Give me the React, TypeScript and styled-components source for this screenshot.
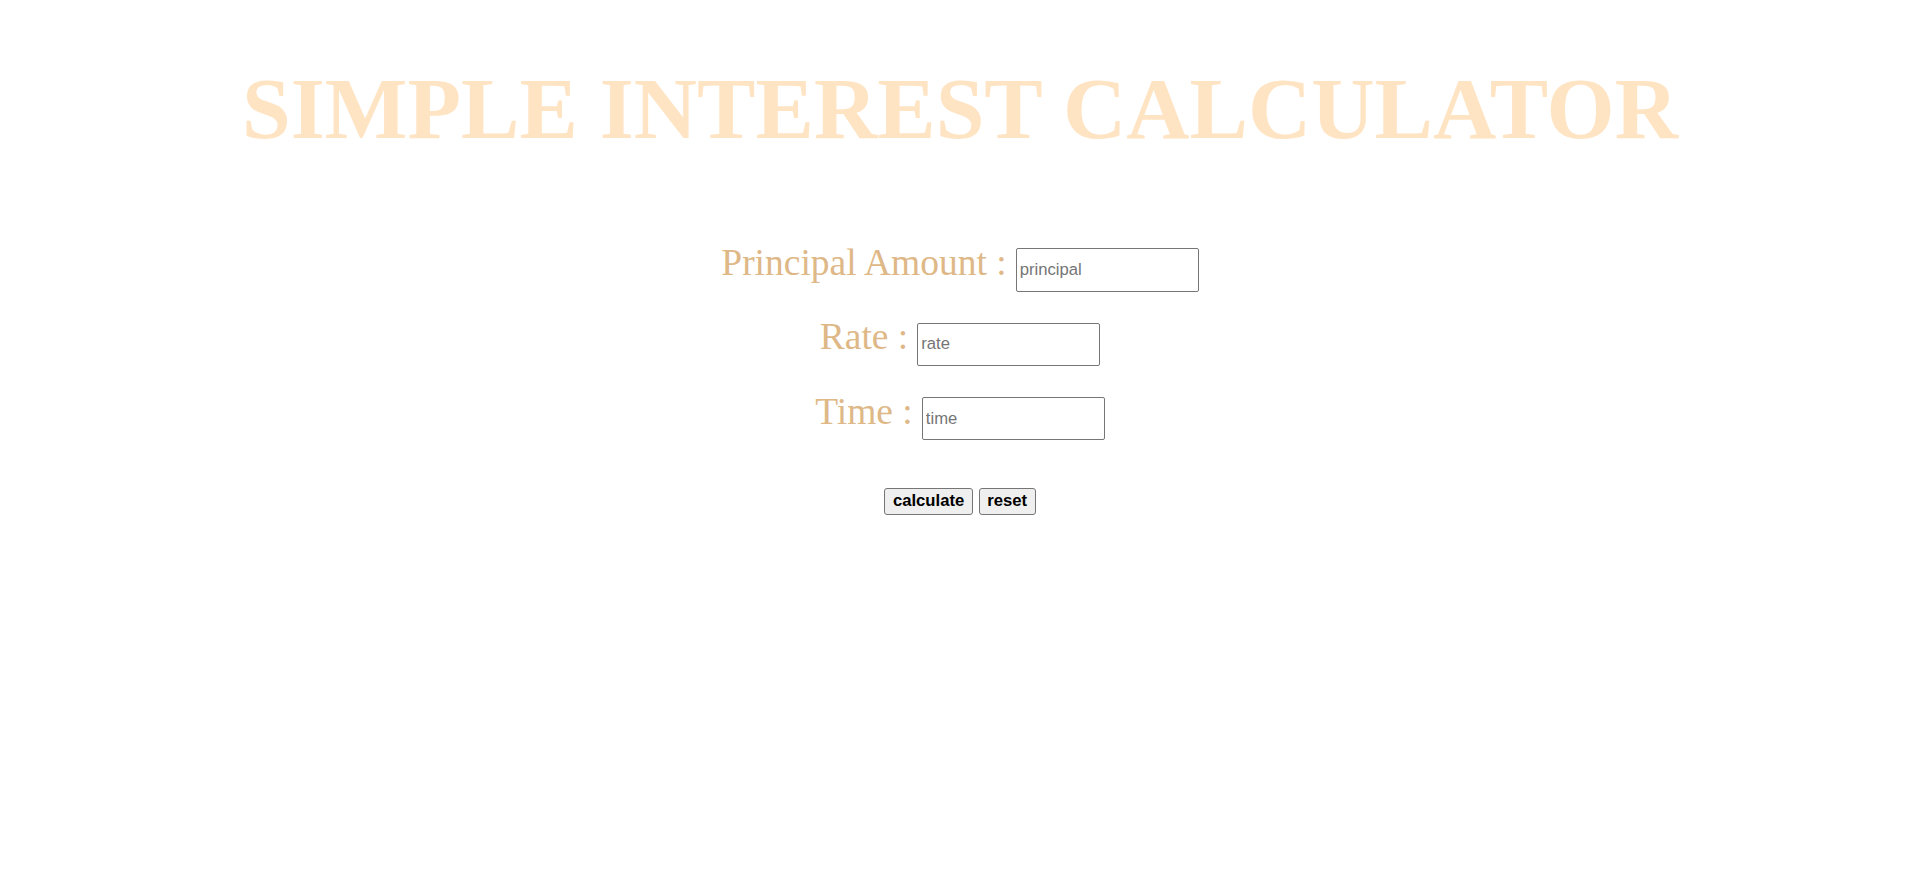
import React from 'react';
import styled, { createGlobalStyle } from 'styled-components';

const GlobalStyle = createGlobalStyle`
	body {
		margin: 0;
		background: #ffffff;
		font-family: 'Liberation Serif', 'Times New Roman', serif;
	}
`;

const fields = [
	{ label: 'Principal Amount :', placeholder: 'principal' },
	{ label: 'Rate :', placeholder: 'rate' },
	{ label: 'Time :', placeholder: 'time' },
];

const App = () => {
	return (
		<>
			<GlobalStyle />
			<Page>
				<Title>SIMPLE INTEREST CALCULATOR</Title>
				<Form>
					{fields.map((field) => (
						<Row key={field.placeholder}>
							<Label>{field.label}</Label>
							<Input type="number" placeholder={field.placeholder} />
						</Row>
					))}
				</Form>
				<Actions>
					<Button type="button">calculate</Button>
					<Button type="button">reset</Button>
				</Actions>
			</Page>
		</>
	);
};

const Page = styled('div')({
	display: 'flex',
	flexDirection: 'column',
	alignItems: 'center',
	minHeight: '888px',
});

const Title = styled('h1')({
	margin: '59px 0 0',
	fontSize: '87.6px',
	lineHeight: '100px',
	fontWeight: 700,
	color: '#ffe4c4',
	textAlign: 'center',
	whiteSpace: 'nowrap',
});

const Form = styled('div')({
	display: 'flex',
	flexDirection: 'column',
	alignItems: 'center',
	gap: '23.6px',
	marginTop: '82px',
});

const Row = styled('div')({
	display: 'flex',
	alignItems: 'baseline',
	justifyContent: 'center',
	gap: '9px',
});

const Label = styled.span`
	font-size: 37.5px;
	line-height: 43.5px;
	color: #deb887;
	white-space: nowrap;
`;

const Input = styled.input`
	box-sizing: border-box;
	width: 183px;
	height: 43.5px;
	padding: 1px 3px;
	border: 1px solid #767676;
	border-radius: 2px;
	font-family: 'Liberation Sans', Arial, sans-serif;
	font-size: 16.67px;
	color: #000;
	background: #fff;
	outline: none;
	-moz-appearance: textfield;

	&::placeholder {
		color: #757575;
	}

	&::-webkit-outer-spin-button,
	&::-webkit-inner-spin-button {
		-webkit-appearance: none;
		margin: 0;
	}
`;

const Actions = styled('div')({
	display: 'flex',
	justifyContent: 'center',
	gap: '6px',
	marginTop: '47.5px',
});

const Button = styled('button')({
	boxSizing: 'border-box',
	height: '27px',
	padding: '0 7.5px',
	border: '1px solid #767676',
	borderRadius: '3px',
	background: '#efefef',
	fontFamily: "'Liberation Sans', Arial, sans-serif",
	fontSize: '16.67px',
	fontWeight: 700,
	color: '#000',
	cursor: 'pointer',
});

export default App;
